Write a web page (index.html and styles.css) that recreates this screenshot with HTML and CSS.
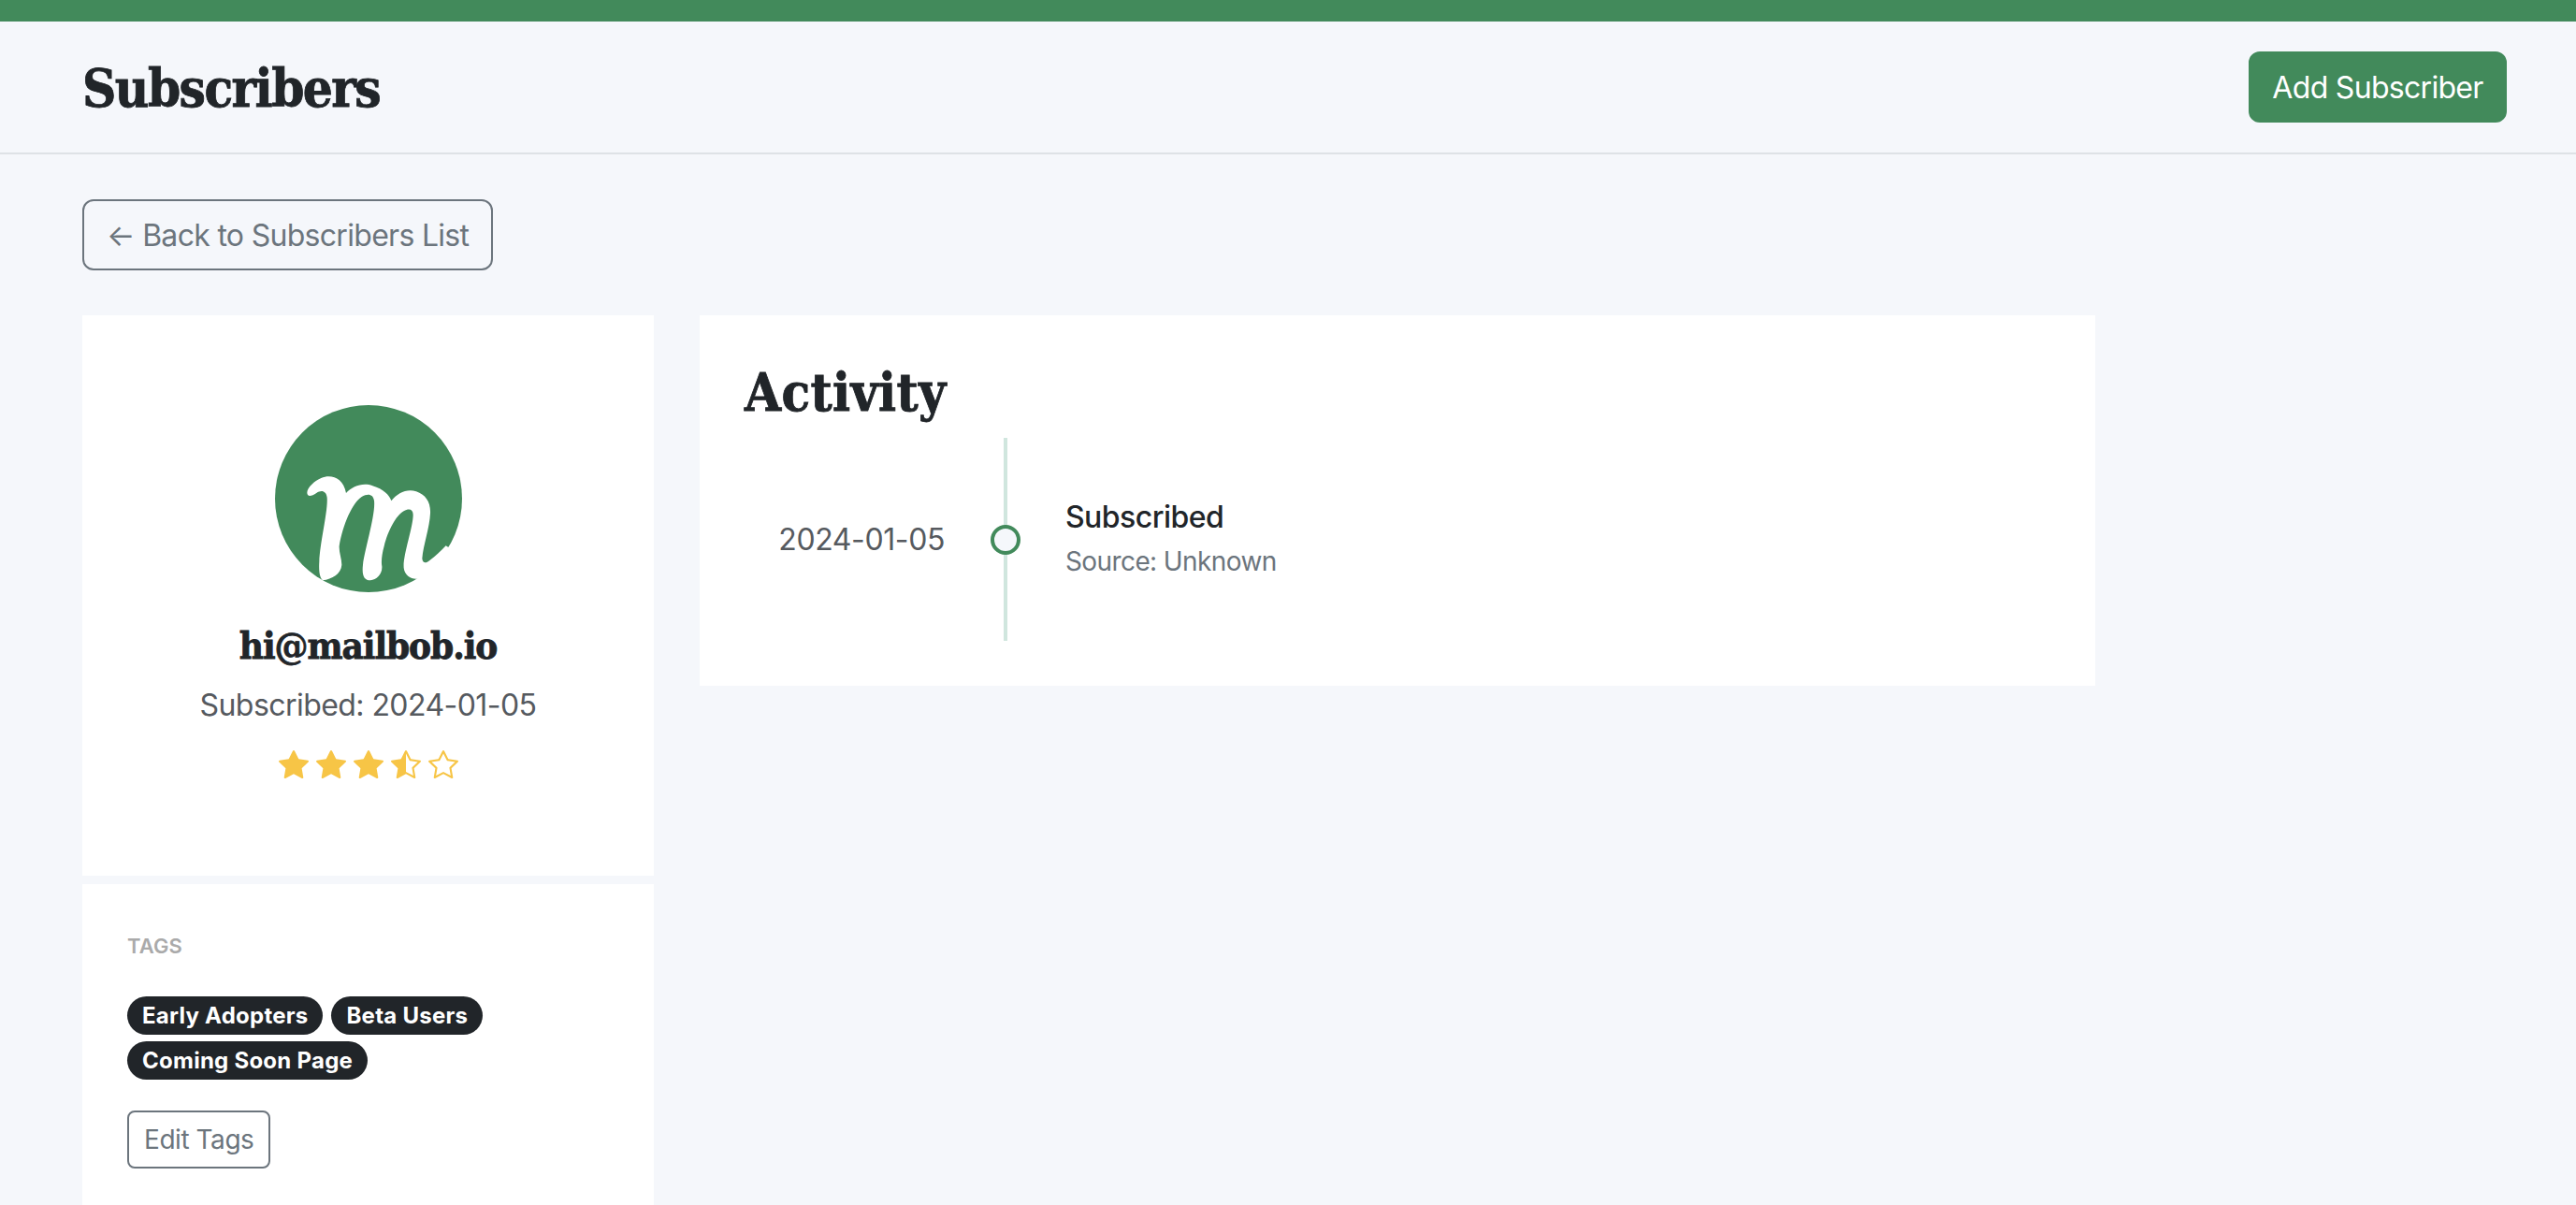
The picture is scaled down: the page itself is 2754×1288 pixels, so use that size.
FILE: index.html
```html
<!DOCTYPE html>
<html lang="en">
<head>
<meta charset="utf-8">
<title>Subscribers</title>
<link rel="stylesheet" href="styles.css">
</head>
<body>
<div class="topbar"></div>
<header class="page-header">
  <h1 class="page-title">Subscribers</h1>
  <a class="btn btn-primary">Add Subscriber</a>
</header>
<main class="content">
  <a class="btn btn-outline back-link">← Back to Subscribers List</a>
  <div class="columns">
    <aside class="sidebar">
      <section class="card profile">
        <svg class="avatar" viewBox="342 98 600 600" aria-hidden="true">
          <circle cx="642" cy="398" r="300" fill="#428a5b"/>
          <path fill="#fff" d="M445 378C446 362 470 340 490 332C520 320 560 328 570 380C590 358 625 345 655 357C690 368 708 385 715 405C735 380 765 365 795 375C825 385 842 410 840 445C838 490 818 545 814 590C816 606 826 606 838 596C858 582 875 565 890 549L897 553L950 560L905 705L800 655C780 658 758 645 755 620C752 580 785 490 785 450C785 432 772 428 755 438C730 452 705 500 692 550C685 575 682 600 685 615C687 640 668 658 648 660C628 660 620 645 624 610C630 560 665 450 660 405C657 383 640 380 620 392C590 412 560 480 548 550C547 570 556 590 556 610C554 640 525 655 495 660C485 650 482 630 484 600C486 540 512 440 509 395C506 372 490 370 475 380C460 390 445 395 445 378Z"/>
        </svg>
        <h2 class="email">hi@mailbob.io</h2>
        <p class="subscribed">Subscribed: 2024-01-05</p>
        <div class="stars" aria-label="3.5 stars">
          <svg class="star" viewBox="0 0 16 16"><path d="M3.612 15.443c-.386.198-.824-.149-.746-.592l.83-4.73L.173 6.765c-.329-.314-.158-.888.283-.95l4.898-.696L7.538.792c.197-.39.73-.39.927 0l2.184 4.327 4.898.696c.441.062.612.636.282.95l-3.522 3.356.83 4.73c.078.443-.36.79-.746.592L8 13.187l-4.389 2.256z"/></svg>
          <svg class="star" viewBox="0 0 16 16"><path d="M3.612 15.443c-.386.198-.824-.149-.746-.592l.83-4.73L.173 6.765c-.329-.314-.158-.888.283-.95l4.898-.696L7.538.792c.197-.39.73-.39.927 0l2.184 4.327 4.898.696c.441.062.612.636.282.95l-3.522 3.356.83 4.73c.078.443-.36.79-.746.592L8 13.187l-4.389 2.256z"/></svg>
          <svg class="star" viewBox="0 0 16 16"><path d="M3.612 15.443c-.386.198-.824-.149-.746-.592l.83-4.73L.173 6.765c-.329-.314-.158-.888.283-.95l4.898-.696L7.538.792c.197-.39.73-.39.927 0l2.184 4.327 4.898.696c.441.062.612.636.282.95l-3.522 3.356.83 4.73c.078.443-.36.79-.746.592L8 13.187l-4.389 2.256z"/></svg>
          <svg class="star" viewBox="0 0 16 16"><path d="M5.354 5.119 7.538.792A.516.516 0 0 1 8 .5c.183 0 .366.097.465.292l2.184 4.327 4.898.696A.537.537 0 0 1 16 6.32a.548.548 0 0 1-.17.445l-3.523 3.356.83 4.73c.078.443-.36.79-.746.592L8 13.187l-4.389 2.256a.52.52 0 0 1-.146.05c-.342.06-.668-.254-.6-.642l.83-4.73L.173 6.765a.55.55 0 0 1-.172-.403.58.58 0 0 1 .085-.302.513.513 0 0 1 .37-.245l4.898-.696zM8 12.027a.5.5 0 0 1 .232.056l3.686 1.894-.694-3.957a.565.565 0 0 1 .162-.505l2.907-2.77-4.052-.576a.525.525 0 0 1-.393-.288L8.001 2.223 8 2.226v9.8z"/></svg>
          <svg class="star" viewBox="0 0 16 16"><path d="M2.866 14.85c-.078.444.36.791.746.593l4.39-2.256 4.389 2.256c.386.198.824-.149.746-.592l-.83-4.73 3.522-3.356c.33-.314.16-.888-.282-.95l-4.898-.696L8.465.792a.513.513 0 0 0-.927 0L5.354 5.12l-4.898.696c-.441.062-.612.636-.283.95l3.523 3.356-.83 4.73zm4.905-2.767-3.686 1.894.694-3.957a.565.565 0 0 0-.163-.505L1.71 6.745l4.052-.576a.525.525 0 0 0 .393-.288L8 2.223l1.847 3.658a.525.525 0 0 0 .393.288l4.052.575-2.906 2.77a.565.565 0 0 0-.163.506l.694 3.957-3.686-1.894a.503.503 0 0 0-.461 0z"/></svg>
        </div>
      </section>
      <section class="card tags-card">
        <h3 class="tags-label">TAGS</h3>
        <div class="tags">
          <span class="tag">Early Adopters</span>
          <span class="tag">Beta Users</span>
          <span class="tag">Coming Soon Page</span>
        </div>
        <a class="btn btn-outline btn-small">Edit Tags</a>
      </section>
    </aside>
    <section class="card activity">
      <h2 class="activity-title">Activity</h2>
      <div class="timeline">
        <div class="timeline-date">2024-01-05</div>
        <div class="timeline-track"><span class="timeline-dot"></span></div>
        <div class="timeline-body">
          <div class="event-title">Subscribed</div>
          <div class="event-source">Source: Unknown</div>
        </div>
      </div>
    </section>
  </div>
</main>
</body>
</html>
```

FILE: styles.css
```css
* { box-sizing: border-box; }
html, body { margin: 0; height: 1288px; overflow: hidden; }
body {
  background: #f5f7fb;
  color: #212529;
  font-family: "Inter", "Liberation Sans", sans-serif;
  font-size: 32px;
  line-height: 48px;
  letter-spacing: -0.7px;
}
.topbar { height: 23px; background: #428a5b; }
.page-header {
  height: 142px;
  padding: 0 74px 0 88px;
  display: flex;
  align-items: center;
  justify-content: space-between;
  border-bottom: 2px solid #dee2e6;
}
.page-title, .email, .activity-title {
  margin: 0;
  font-family: "DejaVu Serif Condensed", "DejaVu Serif", serif;
  font-weight: 700;
  color: #212529;
  -webkit-text-stroke: 0.8px #212529;
}
.page-title { font-size: 56px; line-height: 60px; letter-spacing: -1.55px; padding-top: 2px; }
.btn {
  display: inline-block;
  border-radius: 12px;
  border: 2px solid transparent;
  padding: 13px 24px 11px;
  font-size: 32px;
  line-height: 48px;
  text-decoration: none;
}
.btn-primary { background: #428a5b; border-color: #428a5b; color: #fff; width: 276px; text-align: center; padding: 13px 0 11px; }
.btn-outline { border-color: #6c757d; color: #6c757d; }
.content { padding: 48px 88px 0; }
.columns { margin-top: 48px; display: flex; gap: 49px; align-items: flex-start; }
.sidebar { width: 611px; display: flex; flex-direction: column; gap: 9px; }
.card { background: #fff; }
.profile {
  height: 599px;
  padding-top: 96px;
  display: flex;
  flex-direction: column;
  align-items: center;
  text-align: center;
}
.avatar { width: 200px; height: 200px; display: block; }
.email { font-size: 40px; line-height: 48px; margin-top: 33px; letter-spacing: -1.05px; }
.subscribed { margin: 16px 0 0; color: #565a5f; letter-spacing: -0.56px; }
.stars { display: flex; gap: 8px; margin-top: 23px; }
.star { width: 32px; height: 32px; fill: #f7c546; }
.tags-card { padding: 50px 48px 48px; height: 400px; }
.tags-label { margin: 0; font-size: 22px; line-height: 32px; font-weight: 600; color: #aaaaaa; letter-spacing: 0.1px; }
.tags { margin-top: 38px; display: flex; flex-wrap: wrap; gap: 7px 9px; }
.tag {
  background: #212529;
  color: #fff;
  border-radius: 21px;
  height: 41px;
  padding: 0 16px;
  font-size: 24px;
  line-height: 42px;
  font-weight: 700;
  letter-spacing: 0.25px;
}
.btn-small { margin-top: 33px; padding: 6px 16px; font-size: 28px; line-height: 46px; border-radius: 8px; letter-spacing: -0.45px; }
.activity { width: 1492px; height: 396px; padding: 48px; }
.activity-title { font-size: 56px; line-height: 60px; margin: 0 0 23px; letter-spacing: 0.3px; padding-top: 4px; height: 60px; }
.timeline { display: flex; height: 217px; }
.timeline-date { width: 214px; text-align: right; align-self: center; color: #565a5f; letter-spacing: -0.4px; }
.timeline-track {
  width: 130px;
  display: flex;
  justify-content: center;
  align-items: center;
  background: linear-gradient(#d0e6de, #d0e6de) center / 4px 100% no-repeat;
}
.timeline-dot {
  width: 32px;
  height: 32px;
  border-radius: 50%;
  border: 4px solid #428a5b;
  background: #f5f7fb;
}
.timeline-body { align-self: center; padding-top: 1px; margin-left: -1px; }
.event-title { font-weight: 500; color: #212529; line-height: 44px; letter-spacing: -0.55px; }
.event-source { font-size: 28px; line-height: 46px; color: #6c757d; letter-spacing: -0.6px; margin-top: 2px; }
```
